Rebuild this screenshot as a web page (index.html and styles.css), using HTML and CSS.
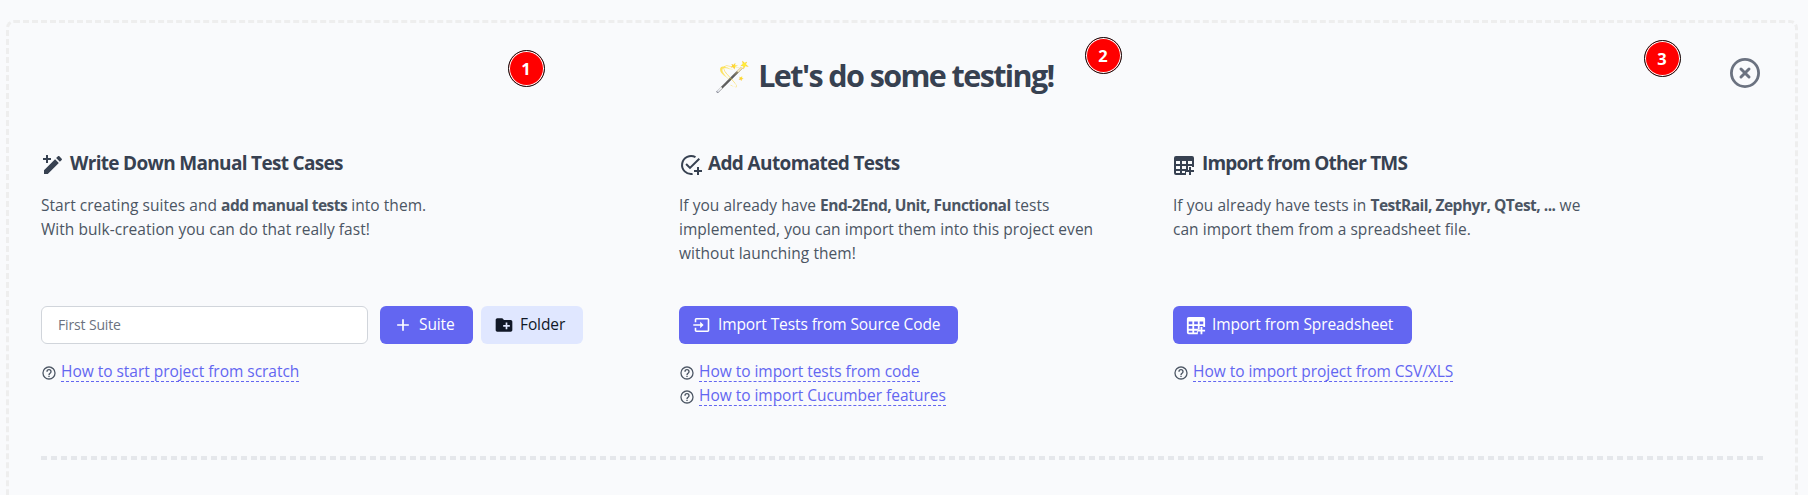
FILE: index.html
```html
<!DOCTYPE html>
<html lang="en">
<head>
<meta charset="utf-8">
<title>Let's do some testing!</title>
<link rel="stylesheet" href="styles.css">
</head>
<body>
<svg width="0" height="0" class="defs">
  <symbol id="help" viewBox="0 0 24 24"><path d="M11,18H13V16H11V18M12,2A10,10 0 0,0 2,12A10,10 0 0,0 12,22A10,10 0 0,0 22,12A10,10 0 0,0 12,2M12,20C7.59,20 4,16.41 4,12C4,7.59 7.59,4 12,4C16.41,4 20,7.59 20,12C20,16.41 16.41,20 12,20M12,6A4,4 0 0,0 8,10H10A2,2 0 0,1 12,8A2,2 0 0,1 14,10C14,12 11,11.75 11,15H13C13,12.75 16,12.5 16,10A4,4 0 0,0 12,6Z"/></symbol>
</svg>
<main class="card">
  <header class="head">
    <h1><span class="wand">🪄</span>Let's do some testing!</h1>
    <svg class="close" viewBox="0 0 36 36"><circle cx="18" cy="18" r="13.6"/><path d="M14 14l8 8M22 14l-8 8"/></svg>
  </header>
  <div class="cols">
    <section>
      <h3 class="t1"><svg viewBox="0 0 24 24"><path d="M20.71,7.04C21.1,6.65 21.1,6 20.71,5.63L18.37,3.29C18,2.9 17.35,2.9 16.96,3.29L15.12,5.12L18.87,8.87M3,17.25V21H6.75L17.81,9.93L14.06,6.18L3,17.25ZM5 2H7V5H10V7H7V10H5V7H2V5H5Z"/></svg>Write Down Manual Test Cases</h3>
      <p>Start creating suites and <b>add manual tests</b> into them.<br>With bulk-creation you can do that really fast!</p>
      <div class="row">
        <input type="text" placeholder="First Suite">
        <button class="btn suite"><svg viewBox="0 0 24 24"><path d="M19,13H13V19H11V13H5V11H11V5H13V11H19V13Z"/></svg>Suite</button>
        <button class="btn folder"><svg viewBox="0 0 24 24"><path d="M20 6h-8l-2-2H4c-1.11 0-1.99.89-1.99 2L2 18c0 1.11.89 2 2 2h16c1.11 0 2-.89 2-2V8c0-1.11-.89-2-2-2zm-1 8h-3v3h-2v-3h-3v-2h3V9h2v3h3v2z"/></svg>Folder</button>
      </div>
      <div class="link"><svg><use href="#help"/></svg><a>How to start project from scratch</a></div>
    </section>
    <section>
      <h3 class="t2"><svg viewBox="0 0 24 24"><path class="line" d="M16.5 4.2A9 9 0 1 0 13.6 20.9M7.1 11l3.9 3.9L20.3 5.7M19 14v8M15 18h8"/></svg>Add Automated Tests</h3>
      <p>If you already have <b>End-2End, Unit, Functional</b> tests<br>implemented, you can import them into this project even<br>without launching them!</p>
      <div class="row">
        <button class="btn code"><svg viewBox="0 0 20 20"><path class="thin" d="M3.5 7.2V4.6a.8.8 0 0 1 .8-.8H15.7a.8.8 0 0 1 .8.8V15.4a.8.8 0 0 1-.8.8H4.3a.8.8 0 0 1-.8-.8V12.8M1.3 10H9"/><path d="M8.2 6.8L11.6 10L8.2 13.2Z"/></svg>Import Tests from Source Code</button>
      </div>
      <div class="link"><svg><use href="#help"/></svg><a>How to import tests from code</a></div>
      <div class="link"><svg><use href="#help"/></svg><a>How to import Cucumber features</a></div>
    </section>
    <section>
      <h3 class="t3"><svg viewBox="0 0 24 24"><path fill-rule="evenodd" d="M3 3H19a2 2 0 0 1 2 2v9h-2v-1h-4v4h-2v5H3a2 2 0 0 1-2-2V5a2 2 0 0 1 2-2zM3 8h4v3H3zM9 8h4v3H9zM15 8h4v3h-4zM3 13h4v3H3zM9 13h4v3H9zM3 18h4v2H3zM9 18h3v2H9z"/><path d="M16 14h2v3h3v2h-3v3h-2v-3h-3v-2h3z"/></svg>Import from Other TMS</h3>
      <p>If you already have tests in <b>TestRail, Zephyr, QTest, ...</b> we<br>can import them from a spreadsheet file.</p>
      <div class="row">
        <button class="btn sheet"><svg viewBox="0 .8 22 22"><path fill-rule="evenodd" d="M3 3H19a2 2 0 0 1 2 2v9h-2v-1h-4v4h-2v5H3a2 2 0 0 1-2-2V5a2 2 0 0 1 2-2zM3 8h4v3H3zM9 8h4v3H9zM15 8h4v3h-4zM3 13h4v3H3zM9 13h4v3H9zM3 18h4v2H3zM9 18h3v2H9z"/><path d="M16 14h2v3h3v2h-3v3h-2v-3h-3v-2h3z"/></svg>Import from Spreadsheet</button>
      </div>
      <div class="link"><svg><use href="#help"/></svg><a>How to import project from CSV/XLS</a></div>
    </section>
  </div>
  <div class="rule"></div>
</main>
<span class="badge b1">1</span>
<span class="badge b2">2</span>
<span class="badge b3">3</span>
</body>
</html>
```
FILE: styles.css
```css
* { box-sizing: border-box; margin: 0; padding: 0; }
body {
  height: 495px;
  padding: 20px 10px 0 6px;
  overflow: hidden;
  background: #f9fafc;
  color: #4b5563;
  font: 15.5px/24px "Open Sans", sans-serif;
}
.defs { display: none; }
svg { fill: currentColor; flex: none; }
.card {
  height: 475px;
  padding: 32px 32px 0;
  border: 3px dashed #eee;
  border-bottom: 0;
  border-radius: 8px 8px 0 0;
}
.head { display: flex; align-items: flex-start; height: 40px; }
h1 {
  flex: 1;
  display: flex;
  justify-content: center;
  color: #374151;
  font-size: 30.5px;
  font-weight: 700;
  line-height: 41px;
  letter-spacing: -1.6px;
  white-space: nowrap;
}
.wand { width: 44px; font-size: 29.5px; letter-spacing: 0; }
.close { width: 36px; height: 36px; color: #6b7280; fill: none; stroke: currentColor; stroke-width: 2.8; }
.close path { stroke-width: 3; stroke-linecap: round; }
.cols { display: grid; grid-template-columns: 638px 494px 1fr; margin-top: 54px; height: 258px; }
h3 {
  display: flex;
  gap: 5px;
  align-items: center;
  color: #374151;
  font-size: 19px;
  font-weight: 700;
  line-height: 28px;
  white-space: nowrap;
}
h3 svg { width: 24px; height: 24px; margin-top: 4px; }
.t1 { letter-spacing: -.68px; }
.t2 { letter-spacing: -.63px; }
.t3 { letter-spacing: -.8px; }
.line { fill: none; stroke: currentColor; stroke-width: 2; }
.thin { fill: none; stroke: currentColor; stroke-width: 1.6; }
p { height: 72px; margin-top: 16px; white-space: nowrap; letter-spacing: .04px; }
b { font-weight: 700; letter-spacing: -.5px; }
.row { display: flex; height: 38px; margin: 41px 0 15px; }
input {
  width: 327px;
  margin-right: 12px;
  padding: 0 16px 2px;
  border: 1px solid #d1d5db;
  border-radius: 6px;
  background: #fff;
  font: 14px "Open Sans", sans-serif;
  letter-spacing: -.15px;
}
input::placeholder { color: #6b7280; opacity: 1; }
.btn {
  display: flex;
  align-items: center;
  gap: 6px;
  padding-left: 13px;
  border: 0;
  border-radius: 6px;
  background: #6366f1;
  color: #fff;
  font: 15.5px/36px "Open Sans", sans-serif;
  letter-spacing: -.1px;
  padding-bottom: 2px;
  white-space: nowrap;
}
.btn svg { width: 20px; height: 20px; margin-top: 2px; }
.suite { width: 93px; margin-right: 8px; }
.folder { width: 102px; background: #e0e7ff; color: #111827; }
.code { width: 279px; }
.sheet { width: 239px; }
.link { display: flex; gap: 4px; height: 24px; white-space: nowrap; }
.link svg { width: 16px; height: 16px; margin-top: 6px; }
.link a { align-self: flex-start; height: 23px; border-bottom: 1px dashed #6366f1; color: #6366f1; letter-spacing: -.03px; }
.rule {
  height: 4px;
  margin-top: 49px;
  background: repeating-linear-gradient(90deg, #e5e7eb 0 6px, transparent 6px 9.977px);
}
.badge {
  position: absolute;
  width: 37px;
  height: 37px;
  border: 1.5px solid #111;
  border-radius: 50%;
  background: #f00;
  box-shadow: inset 0 0 0 1px #fff;
  color: #fff;
  font-size: 16.5px;
  font-weight: 700;
  line-height: 35px;
  text-align: center;
}
.b1 { left: 507.5px; top: 49.5px; }
.b2 { left: 1084.5px; top: 36.5px; }
.b3 { left: 1643.5px; top: 39.5px; }
```
